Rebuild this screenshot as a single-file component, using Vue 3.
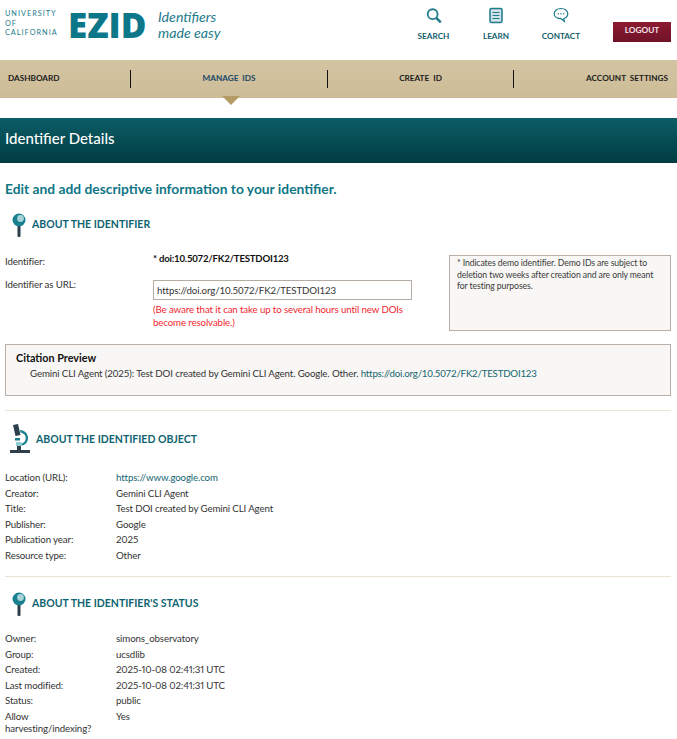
<script setup>
const objectRows = [
  ['Location (URL):', 'https://www.google.com', true],
  ['Creator:', 'Gemini CLI Agent'],
  ['Title:', 'Test DOI created by Gemini CLI Agent'],
  ['Publisher:', 'Google'],
  ['Publication year:', '2025'],
  ['Resource type:', 'Other'],
]
const statusRows = [
  ['Owner:', 'simons_observatory'],
  ['Group:', 'ucsdlib'],
  ['Created:', '2025-10-08 02:41:31 UTC'],
  ['Last modified:', '2025-10-08 02:41:31 UTC'],
  ['Status:', 'public'],
  ['Allow harvesting/indexing?', 'Yes'],
]
</script>

<template>
  <div class="page">
    <header class="top">
      <div class="brand">
        <div class="uc">UNIVERSITY<br />OF<br />CALIFORNIA</div>
        <div class="ezid">EZID</div>
        <div class="tag">Identifiers<br />made easy</div>
      </div>
      <nav class="tools">
        <a class="tool t1">
          <svg width="18" height="18" viewBox="0 0 20 20" fill="none"><circle cx="8.500" cy="8" r="5.500" stroke="#1d7a8a" stroke-width="2"/><path d="M12.500 12l5 5" stroke="#1d7a8a" stroke-width="2.800"/></svg>
          <span>SEARCH</span>
        </a>
        <a class="tool t2">
          <svg width="14" height="18" viewBox="0 0 14 18" fill="none"><rect x="1" y="1.500" width="12" height="14" rx="1.500" fill="#cfe3e6" stroke="#1d7a8a" stroke-width="1.500"/><path d="M3.500 5.500h7M3.500 8.500h7M3.500 11.500h7" stroke="#1d7a8a" stroke-width="1.200"/></svg>
          <span>LEARN</span>
        </a>
        <a class="tool t3">
          <svg width="16" height="18" viewBox="0 0 16 18" fill="none"><path d="M8 1.500c3.900 0 6.800 2.300 6.800 5.200 0 2.300-1.700 4-4 4.800l.6 3-3.200-2.800C4 11.700 1.200 9.600 1.200 6.700 1.200 3.800 4.100 1.500 8 1.500z" fill="#fff" stroke="#1d7a8a" stroke-width="1.200"/><path d="M4.700 6.800h1M7.500 6.800h1M10.300 6.800h1" stroke="#1d7a8a" stroke-width="1.400"/></svg>
          <span>CONTACT</span>
        </a>
        <a class="logout">LOGOUT</a>
      </nav>
    </header>

    <nav class="mainnav">
      <a class="item first">DASHBOARD</a>
      <a class="item second active">MANAGE&nbsp; IDS</a>
      <a class="item third">CREATE&nbsp; ID</a>
      <a class="item last">ACCOUNT&nbsp; SETTINGS</a>
    </nav>

    <h1 class="band">Identifier Details</h1>

    <main class="content">
      <h2 class="lead">Edit and add descriptive information to your identifier.</h2>

      <h3 class="sec sec-first">
        <svg class="glass" width="14" height="24" viewBox="0 0 14 24"><rect x="5.500" y="12" width="3" height="12" rx="1" fill="#2c3f4a"/><circle cx="7" cy="7" r="6.500" fill="#18808f"/><circle cx="8.500" cy="5.500" r="3.400" fill="#a9d3d9"/></svg>
        ABOUT THE IDENTIFIER
      </h3>

      <div class="idgrid">
        <div class="idcol">
          <div class="idrow r1">
            <span class="idlabel l1">Identifier:</span>
            <strong class="doi">* doi:10.5072/FK2/TESTDOI123</strong>
          </div>
          <div class="idrow">
            <span class="idlabel l2">Identifier as URL:</span>
            <div class="urlwrap">
              <input class="url" readonly value="https://doi.org/10.5072/FK2/TESTDOI123" />
              <p class="warn">(Be aware that it can take up to several hours until new DOIs become resolvable.)</p>
            </div>
          </div>
        </div>
        <aside class="note">* Indicates demo identifier. Demo IDs are subject to deletion two weeks after creation and are only meant for testing purposes.</aside>
      </div>

      <section class="citation">
        <h4>Citation Preview</h4>
        <p>Gemini CLI Agent (2025): Test DOI created by Gemini CLI Agent. Google. Other. <a>https://doi.org/10.5072/FK2/TESTDOI123</a></p>
      </section>

      <hr class="rule rule1" />

      <h3 class="sec sec-obj">
        <svg class="scope" width="21" height="29" viewBox="0 0 21 29"><path d="M3 1l5-1 2.500 11-5 1z" fill="#2c3f4a"/><path d="M10 6c4.500.5 8 3.500 8 8 0 4.500-3 7.500-7 7.500H8v-2h3c2.800 0 4.700-2.500 4.700-5.500 0-3-2.300-5-5.200-5.500z" fill="#18808f"/><path d="M5 14h5v2.500H5z" fill="#18808f"/><path d="M6 18h4a2 2 0 010 4H6z" fill="#8fcbd2"/><path d="M7 22h4v4H7z" fill="#2c3f4a"/><rect x="0" y="26" width="20" height="3" fill="#2c3f4a"/></svg>
        ABOUT THE IDENTIFIED OBJECT
      </h3>
      <dl class="rows">
        <template v-for="r in objectRows" :key="r[0]">
          <dt>{{ r[0] }}</dt>
          <dd><a v-if="r[2]">{{ r[1] }}</a><template v-else>{{ r[1] }}</template></dd>
        </template>
      </dl>

      <hr class="rule rule2" />

      <h3 class="sec sec-status">
        <svg class="glass" width="14" height="24" viewBox="0 0 14 24"><rect x="5.500" y="12" width="3" height="12" rx="1" fill="#2c3f4a"/><circle cx="7" cy="7" r="6.500" fill="#18808f"/><circle cx="8.500" cy="5.500" r="3.400" fill="#a9d3d9"/></svg>
        ABOUT THE IDENTIFIER'S STATUS
      </h3>
      <dl class="rows">
        <template v-for="r in statusRows" :key="r[0]">
          <dt>{{ r[0] }}</dt>
          <dd>{{ r[1] }}</dd>
        </template>
      </dl>
    </main>
  </div>
</template>

<style>
html, body { margin: 0; background: #fff; }
</style>

<style scoped>
.page { width: 677px; height: 739px; overflow: hidden; font-family: "Lato", "Open Sans", sans-serif; font-size: 9.700px; letter-spacing: -0.12px; color: #333; }
a { color: #14656f; }
.top { height: 60px; display: flex; justify-content: space-between; }
.brand { display: flex; align-items: flex-start; padding: 9px 0 0 5px; letter-spacing: 0; }
.uc { width: 63px; font-size: 7.300px; line-height: 9.700px; letter-spacing: 1px; color: #1d7a8a; }
.ezid { width: 90px; font-family: "Open Sans", sans-serif; font-weight: 800; font-size: 35px; line-height: 31px; letter-spacing: 0; color: #0b7788; }
.tag { font-style: italic; font-size: 14.200px; line-height: 16px; color: #1d7a8a; }
.tools { display: flex; align-items: flex-start; letter-spacing: 0; }
.tool { display: flex; flex-direction: column; align-items: center; gap: 6px; padding-top: 7px; font-size: 8.200px; color: #14606e; font-weight: 700; }
.tool svg { display: block; }
.t1 { width: 40px; margin-right: 27.500px; }
.t2 { width: 30px; margin-right: 30px; }
.t3 { width: 40px; margin-right: 32px; }
.logout { width: 58px; height: 20px; margin: 22px 6px 0 0; background: linear-gradient(#8c1a32, #6f1228); color: #f3e6ea; font-size: 8.300px; font-weight: 700; line-height: 17px; text-align: center; }
.mainnav { position: relative; height: 38px; display: grid; grid-template-columns: 131px 197px 186px 163px; align-items: center; background: linear-gradient(#d3c4a2, #cdbc97); font-size: 8.200px; font-weight: 700; letter-spacing: 0; }
.item { height: 18px; line-height: 17px; text-align: center; border-right: 1px solid #111; box-sizing: border-box; color: #1c1c1c; }
.first { text-align: left; padding-left: 8px; }
.active { color: #1a4866; position: relative; }
.active::after { content: ""; position: absolute; left: 91px; top: 26px; border-left: 9px solid transparent; border-right: 9px solid transparent; border-top: 9px solid #b39b64; }
.last { border-right: 0; text-align: right; padding-right: 9px; }
.band { margin: 20px 0 0; height: 45px; line-height: 40px; padding-left: 5px; background: linear-gradient(#0c5d66, #003c42); color: #fff; font-size: 15px; font-weight: 500; letter-spacing: 0; }
.content { padding: 0 6px 0 5px; }
.lead { margin: 17px 0 0; font-size: 13.800px; line-height: 18px; color: #0f7686; font-weight: 700; letter-spacing: 0; }
.sec { display: flex; align-items: center; margin: 0; font-size: 10.500px; font-weight: 700; color: #0e6372; letter-spacing: 0; }
.glass { margin-top: 2px; }
.sec-first { margin-top: 12px; height: 28px; padding-left: 7px; gap: 6px; }
.idgrid { display: flex; justify-content: space-between; margin-top: 14px; }
.idcol { width: 444px; }
.idrow { display: flex; }
.r1 { height: 24px; }
.idlabel { width: 148px; line-height: 14px; }
.l1 { padding-top: 2px; }
.l2 { padding-top: 1px; }
.urlwrap { padding-top: 4px; }
.doi { font-weight: 700; color: #111; font-size: 9.600px; letter-spacing: -0.2px; line-height: 14px; }
.url { display: block; box-sizing: border-box; width: 259px; height: 20px; padding: 0 3px; border: 1px solid #b5aca4; font: inherit; letter-spacing: inherit; color: #333; outline: 0; }
.warn { width: 270px; margin: 3px 0 0; color: #f01f2f; line-height: 13px; }
.note { box-sizing: border-box; width: 222px; height: 76px; margin-top: 3px; padding: 1px 7px; border: 1px solid #bab0a8; background: #f8f7f5; font-size: 8.700px; line-height: 11.600px; color: #3a3a3a; }
.citation { box-sizing: border-box; height: 52px; margin-top: 13px; padding: 6px 10px; border: 1px solid #bab0a8; background: #f8f7f5; }
.citation h4 { margin: 0; font-size: 10.800px; line-height: 14px; font-weight: 700; color: #111; letter-spacing: 0; }
.citation p { margin: 1px 0 0 14px; line-height: 14px; }
.citation a { letter-spacing: -0.2px; }
.rule { margin: 0; border: 0; border-top: 1px solid #ece4d3; }
.rule1 { margin-top: 14px; }
.sec-obj { margin-top: 13px; height: 29px; padding-left: 5px; gap: 5px; }
.rows { display: grid; grid-template-columns: 111px 1fr; grid-auto-rows: minmax(15.500px, auto); margin: 17px 0 0; line-height: 12.500px; font-variant-numeric: proportional-nums; }
dt, dd { margin: 0; padding-top: 1px; }
.rule2 { margin-top: 13px; }
.sec-status { margin-top: 13px; height: 26px; padding-left: 7px; gap: 6px; }
.sec-status + .rows { margin-top: 15px; }
</style>
